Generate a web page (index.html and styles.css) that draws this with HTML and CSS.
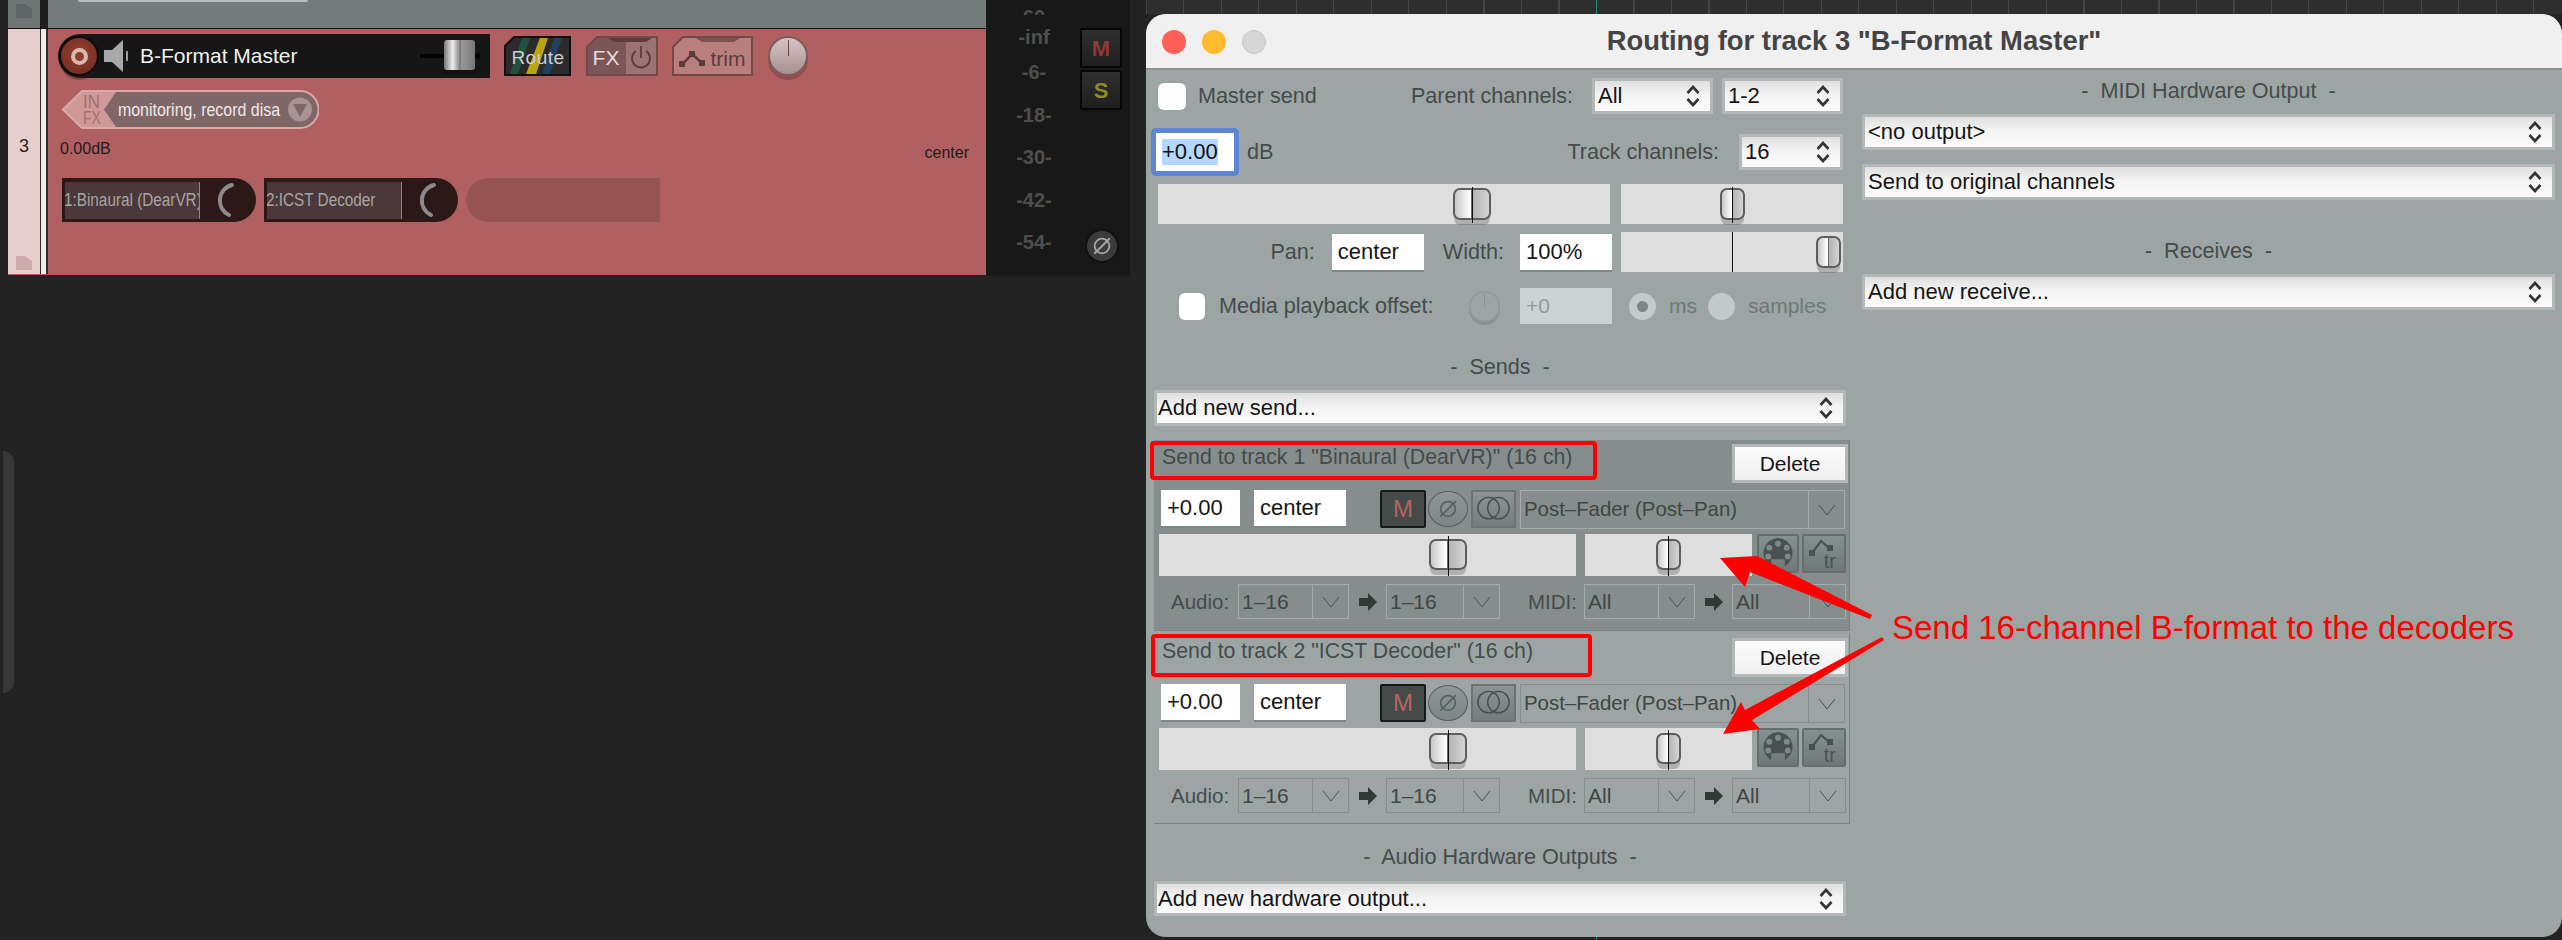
FILE: index.html
```html
<!DOCTYPE html>
<html>
<head>
  <meta charset="utf-8">
  <title>Routing for track 3</title>
  <link rel="stylesheet" href="styles.css">
</head>
<body>

<svg class="defs" width="0" height="0">
  <symbol id="updown" viewBox="0 0 14 22">
    <path d="M1.5 8 L7 2 L12.500 8 M1.500 14 L7 20 L12.500 14" fill="none" stroke="#333" stroke-width="2.6"/>
  </symbol>
  <symbol id="vee" viewBox="0 0 18 12">
    <path d="M1 1 L9 11 L17 1" fill="none" stroke="#4b5251" stroke-width="1"/>
  </symbol>
  <symbol id="rarrow" viewBox="0 0 18 18">
    <path d="M0 5 H9 V0 L18 9 L9 18 V13 H0 Z" fill="#333837"/>
  </symbol>
  <symbol id="phase" viewBox="0 0 24 24">
    <circle cx="12" cy="12" r="8" fill="none" stroke="currentColor" stroke-width="2"/>
    <path d="M3 21 L21 3" stroke="currentColor" stroke-width="2"/>
  </symbol>
  <symbol id="midi" viewBox="0 0 32 36">
    <path d="M16 2 A15.500 15.500 0 0 1 23 31 V24 H9 V31 A15.500 15.500 0 0 1 16 2 Z" fill="#4a5251"/>
    <circle cx="16" cy="8" r="3" fill="#808988"/>
    <circle cx="7" cy="12" r="3" fill="#808988"/>
    <circle cx="25" cy="12" r="3" fill="#808988"/>
    <circle cx="6" cy="21" r="3" fill="#808988"/>
    <circle cx="26" cy="21" r="3" fill="#808988"/>
  </symbol>
  <symbol id="trk" viewBox="0 0 36 30">
    <path d="M8 17 L17 5 L25 12" fill="none" stroke="#4a5251" stroke-width="2.200"/>
    <rect x="5" y="14" width="6" height="6" fill="#4a5251"/>
    <rect x="23" y="9" width="6" height="6" fill="#4a5251"/>
  </symbol>
</svg>

<div class="page">

  <!-- arrange view on the left -->
  <div class="arrange">
    <div class="edge-strip"><div class="scroll-notch"></div></div>
    <div class="lanes">
      <div class="lane-top">
        <div class="num-top"><div class="folder folder-top"></div></div>
        <div class="sep-top"></div>
        <div class="body-top"><div class="prev-pill"></div></div>
      </div>
      <div class="lane-main">
        <div class="num-main">
          <span class="track-num">3</span>
          <div class="folder folder-main"></div>
        </div>
        <div class="sep-main"></div>
        <div class="body-main">
          <div class="tcp-row">
            <div class="name-bar">
              <div class="rec"><div class="rec-ring"></div></div>
              <svg class="speaker" width="24" height="34" viewBox="0 0 24 34">
                <path d="M0 11 H8 L19 1 V33 L8 23 H0 Z" fill="#a9a9a9"/>
                <rect x="22" y="12" width="2" height="10" fill="#999"/>
              </svg>
              <span class="name-text">B-Format Master</span>
              <div class="vol">
                <div class="vol-line"></div>
                <div class="vol-thumb"></div>
              </div>
            </div>
            <svg class="tcp-btn route" width="67" height="40" viewBox="0 0 67 40">
              <path d="M10 1 H66 V39 H1 V10 Z" fill="#2e2a2b" stroke="#111" stroke-width="2"/>
              <path d="M18 2 H26 L14 38 H6 Z" fill="#22503f"/>
              <path d="M36 2 H44 L32 38 H22 Z" fill="#b9a412"/>
              <path d="M50 2 H58 L46 38 H38 Z" fill="#21405a"/>
              <text x="34" y="28" text-anchor="middle" class="route-text">Route</text>
            </svg>
            <svg class="tcp-btn fx" width="72" height="40" viewBox="0 0 72 40">
              <path d="M11 1 H71 V39 H1 V11 Z" fill="#9c7272" stroke="#744848" stroke-width="2"/>
              <path d="M11 2 H40 V38 H2 V11 Z" fill="#7a5656"/>
              <path d="M22 2 H66 L60 6 H28 Z" fill="#5c3d3d"/>
              <text x="20" y="29" text-anchor="middle" class="fx-text">FX</text>
              <path d="M50 15 A9 9 0 1 0 60 15 M55 10 V22" fill="none" stroke="#5c3b3b" stroke-width="1.800"/>
            </svg>
            <svg class="tcp-btn trim" width="81" height="40" viewBox="0 0 81 40">
              <path d="M11 1 H80 V39 H1 V11 Z" fill="#b97f7f" stroke="#744848" stroke-width="2"/>
              <path d="M24 2 H68 L62 6 H30 Z" fill="#7f5050"/>
              <path d="M10 29 L20 18 L30 27" fill="none" stroke="#5c3b3b" stroke-width="2.500"/>
              <rect x="7" y="25" width="6" height="6" fill="#5c3b3b"/>
              <rect x="17" y="15" width="6" height="6" fill="#5c3b3b"/>
              <rect x="27" y="24" width="6" height="6" fill="#5c3b3b"/>
              <text x="56" y="30" text-anchor="middle" class="trim-text">trim</text>
            </svg>
            <div class="trim-knob"><div class="trim-tick"></div></div>
          </div>

          <svg class="input-pill" width="257" height="39" viewBox="0 0 257 39">
            <path d="M20 1 H238 A18.500 18.500 0 0 1 238 38 H20 L1 19.500 Z" fill="#cf9999" stroke="#dba8a8" stroke-width="2"/>
            <path d="M54 2 H238 A17.500 17.500 0 0 1 238 37 H54 L42 19.500 Z" fill="#7f6767"/>
            <text x="21" y="18" textLength="17" lengthAdjust="spacingAndGlyphs" class="infx">IN</text>
            <text x="21" y="34" textLength="18" lengthAdjust="spacingAndGlyphs" class="infx">FX</text>
            <text x="56" y="26" textLength="162" lengthAdjust="spacingAndGlyphs" class="pill-text">monitoring, record disa</text>
            <circle cx="238" cy="19.500" r="12" fill="#a99292"/>
            <path d="M231 14 H245 L238 27 Z" fill="#7f6767"/>
          </svg>

          <div class="readout">
            <span>0.00dB</span>
            <span class="readout-pan">center</span>
          </div>

          <div class="slots">
            <div class="slot">
              <div class="slot-name"><span class="slot-label">1:Binaural (DearVR)</span></div>
              <svg class="slot-arc" width="24" height="36" viewBox="0 0 24 36">
                <path d="M18 3 A16 16 0 0 0 15 33" fill="none" stroke="#8b8b8b" stroke-width="4" stroke-linecap="round"/>
              </svg>
            </div>
            <div class="slot">
              <div class="slot-name"><span class="slot-label">2:ICST Decoder</span></div>
              <svg class="slot-arc" width="24" height="36" viewBox="0 0 24 36">
                <path d="M18 3 A16 16 0 0 0 15 33" fill="none" stroke="#8b8b8b" stroke-width="4" stroke-linecap="round"/>
              </svg>
            </div>
            <div class="slot-empty"></div>
          </div>
        </div>
      </div>
    </div>

    <div class="meter">
      <div class="scale">
        <div class="db db-clip">-60-</div>
        <div class="db db-inf">-inf</div>
        <div class="db db-six">-6-</div>
        <div class="db db-step">-18-</div>
        <div class="db db-step">-30-</div>
        <div class="db db-step">-42-</div>
        <div class="db db-step">-54-</div>
      </div>
      <div class="meter-btns">
        <div class="ms-btn ms-m">M</div>
        <div class="ms-btn ms-s">S</div>
        <svg class="meter-phase"><use href="#phase"/></svg>
      </div>
    </div>
  </div>

  <!-- routing window -->
  <div class="desk">
    <div class="ruler"></div>
    <div class="window">
      <div class="titlebar">
        <div class="lights">
          <span class="light light-red"></span>
          <span class="light light-yellow"></span>
          <span class="light light-grey"></span>
        </div>
        <div class="title">Routing for track 3 "B-Format Master"</div>
      </div>

      <div class="win-body">
        <div class="col-left">
          <div class="row row-one">
            <div class="check"></div>
            <span class="lbl lbl-master">Master send</span>
            <span class="lbl lbl-parent">Parent channels:</span>
            <div class="select sel-parent"><span>All</span><svg class="updown"><use href="#updown"/></svg></div>
            <div class="select sel-pair"><span>1-2</span><svg class="updown"><use href="#updown"/></svg></div>
          </div>

          <div class="row row-two">
            <div class="focus-input"><span class="selected">+0.00</span></div>
            <span class="lbl lbl-db">dB</span>
            <span class="lbl lbl-track">Track channels:</span>
            <div class="select sel-track"><span>16</span><svg class="updown"><use href="#updown"/></svg></div>
          </div>

          <div class="row row-three">
            <div class="fader fader-vol"><div class="tick tick-vol"></div><div class="thumb thumb-wide thumb-vol"></div></div>
            <div class="fader fader-pan"><div class="tick tick-pan"></div><div class="thumb thumb-thin thumb-pan"></div></div>
          </div>

          <div class="row row-four">
            <span class="lbl lbl-pan">Pan:</span>
            <div class="field field-center">center</div>
            <span class="lbl lbl-width">Width:</span>
            <div class="field field-width">100%</div>
            <div class="fader fader-width"><div class="width-mid"></div><div class="thumb thumb-thin thumb-width"></div></div>
          </div>

          <div class="row row-five">
            <div class="check check-media"></div>
            <span class="lbl lbl-media">Media playback offset:</span>
            <div class="knob-off"><div class="knob-tick"></div></div>
            <div class="field-off">+0</div>
            <div class="radio radio-ms"><div class="radio-dot"></div></div>
            <span class="lbl-off lbl-ms">ms</span>
            <div class="radio radio-samples"></div>
            <span class="lbl-off lbl-samples">samples</span>
          </div>

          <div class="section sec-sends">-&nbsp; Sends &nbsp;-</div>
          <div class="select sel-wide sel-send"><span>Add new send...</span><svg class="updown"><use href="#updown"/></svg></div>

          <div class="send send-active">
            <div class="send-head">
              <span class="send-title">Send to track 1 "Binaural (DearVR)" (16 ch)</span>
              <div class="delete">Delete</div>
            </div>
            <div class="send-row-a">
              <div class="field send-vol">+0.00</div>
              <div class="field send-pan">center</div>
              <div class="btn-mute">M</div>
              <svg class="btn-phase"><use href="#phase"/></svg>
              <svg class="btn-stereo" viewBox="0 0 45 38">
                <circle cx="17" cy="18" r="12" fill="none" stroke="#474e4d" stroke-width="1.600"/>
                <circle cx="28" cy="18" r="12" fill="none" stroke="#474e4d" stroke-width="1.600"/>
              </svg>
              <div class="combo combo-mode"><span class="combo-text">Post–Fader (Post–Pan)</span><span class="combo-arrow"><svg class="vee"><use href="#vee"/></svg></span></div>
            </div>
            <div class="send-row-b">
              <div class="fader send-fader-vol"><div class="tick tick-send-vol"></div><div class="thumb thumb-wide thumb-send-vol"></div></div>
              <div class="fader send-fader-pan"><div class="tick tick-send-pan"></div><div class="thumb thumb-thin thumb-send-pan"></div></div>
              <div class="icon-btn btn-midi"><svg class="icon-midi"><use href="#midi"/></svg></div>
              <div class="icon-btn btn-tr"><svg class="icon-trk"><use href="#trk"/></svg><span class="tr-text">tr</span></div>
            </div>
            <div class="send-row-c">
              <span class="lbl lbl-audio">Audio:</span>
              <div class="combo"><span class="combo-text">1–16</span><span class="combo-arrow"><svg class="vee"><use href="#vee"/></svg></span></div>
              <svg class="rarrow"><use href="#rarrow"/></svg>
              <div class="combo"><span class="combo-text">1–16</span><span class="combo-arrow"><svg class="vee"><use href="#vee"/></svg></span></div>
              <span class="lbl lbl-midi">MIDI:</span>
              <div class="combo"><span class="combo-text">All</span><span class="combo-arrow"><svg class="vee"><use href="#vee"/></svg></span></div>
              <svg class="rarrow"><use href="#rarrow"/></svg>
              <div class="combo"><span class="combo-text">All</span><span class="combo-arrow"><svg class="vee"><use href="#vee"/></svg></span></div>
            </div>
          </div>

          <div class="send send-next">
            <div class="send-head">
              <span class="send-title">Send to track 2 "ICST Decoder" (16 ch)</span>
              <div class="delete">Delete</div>
            </div>
            <div class="send-row-a">
              <div class="field send-vol">+0.00</div>
              <div class="field send-pan">center</div>
              <div class="btn-mute">M</div>
              <svg class="btn-phase"><use href="#phase"/></svg>
              <svg class="btn-stereo" viewBox="0 0 45 38">
                <circle cx="17" cy="18" r="12" fill="none" stroke="#474e4d" stroke-width="1.600"/>
                <circle cx="28" cy="18" r="12" fill="none" stroke="#474e4d" stroke-width="1.600"/>
              </svg>
              <div class="combo combo-mode"><span class="combo-text">Post–Fader (Post–Pan)</span><span class="combo-arrow"><svg class="vee"><use href="#vee"/></svg></span></div>
            </div>
            <div class="send-row-b">
              <div class="fader send-fader-vol"><div class="tick tick-send-vol"></div><div class="thumb thumb-wide thumb-send-vol"></div></div>
              <div class="fader send-fader-pan"><div class="tick tick-send-pan"></div><div class="thumb thumb-thin thumb-send-pan"></div></div>
              <div class="icon-btn btn-midi"><svg class="icon-midi"><use href="#midi"/></svg></div>
              <div class="icon-btn btn-tr"><svg class="icon-trk"><use href="#trk"/></svg><span class="tr-text">tr</span></div>
            </div>
            <div class="send-row-c">
              <span class="lbl lbl-audio">Audio:</span>
              <div class="combo"><span class="combo-text">1–16</span><span class="combo-arrow"><svg class="vee"><use href="#vee"/></svg></span></div>
              <svg class="rarrow"><use href="#rarrow"/></svg>
              <div class="combo"><span class="combo-text">1–16</span><span class="combo-arrow"><svg class="vee"><use href="#vee"/></svg></span></div>
              <span class="lbl lbl-midi">MIDI:</span>
              <div class="combo"><span class="combo-text">All</span><span class="combo-arrow"><svg class="vee"><use href="#vee"/></svg></span></div>
              <svg class="rarrow"><use href="#rarrow"/></svg>
              <div class="combo"><span class="combo-text">All</span><span class="combo-arrow"><svg class="vee"><use href="#vee"/></svg></span></div>
            </div>
          </div>

          <div class="section sec-hw">-&nbsp; Audio Hardware Outputs &nbsp;-</div>
          <div class="select sel-wide sel-hw"><span>Add new hardware output...</span><svg class="updown"><use href="#updown"/></svg></div>
        </div>

        <div class="col-right">
          <div class="section sec-midi">-&nbsp; MIDI Hardware Output &nbsp;-</div>
          <div class="select sel-right sel-midi"><span>&lt;no output&gt;</span><svg class="updown"><use href="#updown"/></svg></div>
          <div class="select sel-right sel-orig"><span>Send to original channels</span><svg class="updown"><use href="#updown"/></svg></div>
          <div class="section sec-recv">-&nbsp; Receives &nbsp;-</div>
          <div class="select sel-right sel-midi"><span>Add new receive...</span><svg class="updown"><use href="#updown"/></svg></div>
        </div>
      </div>
    </div>
  </div>

  <!-- red markup drawn on top of the screenshot -->
  <svg class="markup" width="2562" height="940" viewBox="0 0 2562 940">
    <rect x="1152" y="443" width="443" height="35" rx="2" fill="none" stroke="#f00" stroke-width="4"/>
    <rect x="1153" y="636" width="437" height="39" rx="2" fill="none" stroke="#f00" stroke-width="4"/>
    <path d="M1872 615 L1757 556 L1720 558 L1745 587 L1750 572 L1870 619 Z" fill="#f00"/>
    <path d="M1882 637 L1745 710 L1741 702 L1723 734 L1760 729 L1752 720 L1884 640 Z" fill="#f00"/>
  </svg>
  <div class="callout">Send 16-channel B-format to the decoders</div>

</div>

</body>
</html>
```

FILE: styles.css
```css
* {
  box-sizing: border-box;
}

body {
  margin: 0;
  background-color: #222;
  font-family: "Liberation Sans", Arial, sans-serif;
}

.defs {
  position: absolute;
}

.page {
  position: relative;
  display: flex;
  width: 2562px;
  height: 940px;
  overflow: hidden;
  background-color: #232323;
}

/* arrange view */

.arrange {
  display: flex;
  width: 1146px;
  height: 276px;
  flex: none;
}

.edge-strip {
  position: relative;
  width: 8px;
  flex: none;
}

.scroll-notch {
  position: absolute;
  top: 451px;
  left: 3px;
  width: 11px;
  height: 242px;
  background-color: #383838;
  border-radius: 0 10px 10px 0;
}

.lanes {
  width: 978px;
  flex: none;
}

.lane-top {
  display: flex;
  height: 29px;
  border-bottom: 1px solid #111;
}

.num-top {
  width: 32px;
  padding: 4px 8px;
  background-color: #6d7575;
}

.sep-top {
  width: 8px;
  background-color: #1d1d1d;
}

.body-top {
  flex: 1;
  background-color: #737b7b;
}

.prev-pill {
  width: 230px;
  height: 2px;
  margin-left: 30px;
  background-color: #b9bebe;
  border-radius: 0 0 6px 6px;
}

.folder {
  width: 16px;
  height: 14px;
  clip-path: polygon(0 0, 55% 0, 100% 35%, 100% 100%, 0 100%);
}

.folder-top {
  background-color: #5d6565;
}

.folder-main {
  position: absolute;
  left: 8px;
  bottom: 4px;
  background-color: #cfaaaa;
}

.lane-main {
  display: flex;
  height: 246px;
  border-bottom: 1px solid #c25656;
}

.num-main {
  position: relative;
  display: flex;
  align-items: center;
  justify-content: center;
  width: 32px;
  background-color: #e8cfcf;
}

.track-num {
  margin-top: -11px;
  font-size: 18px;
  color: #2b2222;
}

.sep-main {
  width: 8px;
  background-color: #eee;
  border-left: 1px solid #332a2a;
  border-right: 2px solid #332a2a;
}

.body-main {
  flex: 1;
  padding: 5px 0 0 10px;
  background-color: #b06061;
}

.tcp-row {
  display: flex;
  align-items: center;
  height: 44px;
}

.name-bar {
  display: flex;
  align-items: center;
  width: 432px;
  height: 44px;
  background-color: #161616;
  border-radius: 22px 0 0 22px;
  flex: none;
}

.rec {
  display: flex;
  align-items: center;
  justify-content: center;
  width: 40px;
  height: 40px;
  margin-left: 1px;
  background: radial-gradient(circle at 50% 40%, #92402e, #6e2a1f);
  border: 2px solid #0b0b0b;
  border-radius: 50%;
  box-shadow: 0 5px 0 -1px rgba(60, 20, 20, 0.35);
}

.rec-ring {
  width: 17px;
  height: 17px;
  background-color: #8e3c2c;
  border: 4px solid #d9b9b0;
  border-radius: 50%;
}

.speaker {
  margin-left: 5px;
  flex: none;
}

.name-text {
  margin-left: 12px;
  font-size: 21px;
  color: #f1f1f1;
}

.vol {
  position: relative;
  width: 60px;
  height: 44px;
  margin-left: auto;
  margin-right: 10px;
}

.vol-line {
  position: absolute;
  top: 20px;
  left: 0;
  width: 60px;
  height: 4px;
  background-color: #000;
}

.vol-thumb {
  position: absolute;
  top: 6px;
  left: 24px;
  width: 31px;
  height: 30px;
  background: linear-gradient(90deg, #777, #eee 28%, #888 50%, #444 50%, #9a9a9a 55%, #777 100%);
  border-radius: 3px;
  box-shadow: 0 4px 0 #111;
}

.tcp-btn {
  flex: none;
}

.route {
  margin-left: 14px;
}

.fx {
  margin-left: 15px;
}

.trim {
  margin-left: 14px;
}

.route-text {
  font-size: 19px;
  fill: #cfcfcf;
  letter-spacing: 0.5px;
}

.fx-text {
  font-size: 21px;
  fill: #e6dcdc;
}

.trim-text {
  font-size: 21px;
  fill: #5c3b3b;
}

.trim-knob {
  position: relative;
  width: 40px;
  height: 40px;
  margin-left: 15px;
  background: linear-gradient(#d8c3c3, #a89090);
  border: 2px solid #7d5a5a;
  border-radius: 50%;
  box-shadow: 0 4px 0 rgba(90, 40, 40, 0.35);
  flex: none;
}

.trim-tick {
  position: absolute;
  top: 2px;
  left: 18px;
  width: 1px;
  height: 16px;
  background-color: #5f4a4a;
}

.input-pill {
  display: block;
  margin: 12px 0 0 4px;
}

.infx {
  font-size: 18px;
  fill: #a56d6d;
}

.pill-text {
  font-size: 19px;
  fill: #efe9e9;
}

.readout {
  display: flex;
  justify-content: space-between;
  align-items: center;
  height: 20px;
  margin: 10px 17px 0 2px;
  font-size: 16px;
  color: #241b1b;
}

.readout-pan {
  margin-top: 8px;
}

.slots {
  display: flex;
  gap: 8px;
  margin: 19px 0 0 4px;
}

.slot {
  display: flex;
  align-items: center;
  width: 194px;
  height: 44px;
  padding-left: 3px;
  background-color: #2b1817;
  border-radius: 0 22px 22px 0;
}

.slot-name {
  width: 135px;
  height: 37px;
  overflow: hidden;
  font-size: 18px;
  line-height: 37px;
  white-space: nowrap;
  color: #a9a4a4;
  background-color: #4a3938;
  border-right: 1px solid #8d8484;
}

.slot-label {
  display: inline-block;
  margin-left: -1px;
  transform: scaleX(0.85);
  transform-origin: left center;
}

.slot-arc {
  margin-left: 14px;
}

.slot-empty {
  width: 194px;
  height: 44px;
  background-color: #955354;
  border-radius: 22px 0 0 22px;
}

.meter {
  display: flex;
  width: 144px;
  height: 276px;
  background-color: #181818;
  overflow: hidden;
  flex: none;
}

.scale {
  width: 96px;
  flex: none;
  text-align: center;
}

.db {
  font-size: 20px;
  font-weight: bold;
  line-height: 22px;
  color: #4f4f4f;
}

.db-clip {
  height: 15px;
  padding-top: 6px;
  overflow: hidden;
}

.db-inf {
  margin-top: 11px;
}

.db-six {
  margin-top: 13px;
}

.db-step {
  margin-top: 20.5px;
}

.meter-btns {
  padding: 28px 0 0 0;
  margin-left: -2px;
}

.ms-btn {
  width: 42px;
  height: 40px;
  margin-bottom: 2px;
  font-size: 22px;
  font-weight: bold;
  line-height: 38px;
  text-align: center;
  background: linear-gradient(#2f2f2f, #1f1f1f);
  border: 2px solid #060606;
  border-radius: 2px;
}

.ms-m {
  color: #8d3a35;
}

.ms-s {
  color: #8f8a30;
}

.meter-phase {
  display: block;
  width: 30px;
  height: 30px;
  margin: 121px 0 0 7px;
  padding: 4px;
  color: #a6a6a6;
  background-color: #3b3b3b;
  border-radius: 50%;
  box-shadow: 0 0 0 2px #111;
}

/* routing window */

.desk {
  width: 1416px;
  height: 940px;
  flex: none;
  background: linear-gradient(#2a8a7a, #2a8a7a) 450px 0 / 1px 100% no-repeat;
}

.ruler {
  height: 14px;
  background:
    linear-gradient(#2a8a7a, #2a8a7a) 450px 0 / 1px 100% no-repeat,
    repeating-linear-gradient(90deg, #454545 0, #454545 1px, transparent 1px, transparent 37.500px),
    #2e2e2e;
}

.window {
  height: 923px;
  background-color: #9ca5a3;
  border-radius: 20px;
  overflow: hidden;
}

.titlebar {
  position: relative;
  display: flex;
  align-items: center;
  justify-content: center;
  height: 56px;
  background-color: #f0f0f0;
  border-bottom: 2px solid #8b9291;
}

.lights {
  position: absolute;
  top: 16px;
  left: 16px;
  display: flex;
  gap: 16px;
}

.light {
  width: 24px;
  height: 24px;
  border-radius: 50%;
}

.light-red {
  background-color: #ff5f57;
}

.light-yellow {
  background-color: #febc2e;
}

.light-grey {
  background-color: #d6d6d6;
  border: 1px solid #c4c4c4;
}

.title {
  font-size: 27.4px;
  font-weight: bold;
  color: #444;
}

.win-body {
  display: flex;
  height: 867px;
}

.col-left {
  width: 704px;
  padding-top: 8px;
  flex: none;
}

.col-right {
  width: 693px;
  margin-left: 12px;
  flex: none;
}

.row {
  display: flex;
  align-items: center;
  padding: 0 7px 0 12px;
}

.row-one {
  height: 36px;
}

.row-two {
  height: 48px;
  margin-top: 14px;
}

.row-three {
  height: 40px;
  margin-top: 8px;
  justify-content: space-between;
}

.row-four {
  height: 40px;
  margin-top: 8px;
}

.row-five {
  height: 36px;
  margin-top: 16px;
}

.lbl {
  font-size: 21.6px;
  color: #454b4b;
  white-space: nowrap;
}

.lbl-off {
  font-size: 21px;
  color: #6f7777;
}

.check {
  width: 28px;
  height: 27px;
  background-color: #fff;
  border-radius: 6px;
  flex: none;
}

.lbl-master {
  margin-left: 12px;
}

.lbl-parent {
  margin-left: auto;
}

.select {
  display: flex;
  align-items: center;
  justify-content: space-between;
  height: 36px;
  padding: 0 10px 0 3px;
  font-size: 22px;
  color: #151515;
  background: linear-gradient(#dfdfdf, #f3f3f3 45%, #fbfbfb);
  border: 3px solid #b2b8b7;
  flex: none;
}

.updown {
  width: 14px;
  height: 22px;
  flex: none;
}

.sel-parent {
  width: 121px;
  margin-left: 19px;
}

.sel-pair {
  width: 121px;
  margin-left: 9px;
}

.focus-input {
  display: flex;
  align-items: center;
  width: 88px;
  height: 48px;
  margin-left: -7px;
  padding-left: 6px;
  background-color: #fff;
  border: 5px solid #5c85d6;
  border-radius: 5px;
  font-size: 22px;
  color: #111;
}

.selected {
  background-color: #b3d7ff;
  padding: 0;
}

.lbl-db {
  margin-left: 8px;
}

.lbl-track {
  margin-left: auto;
}

.sel-track {
  width: 104px;
  margin-left: 20px;
}

.fader {
  position: relative;
  height: 40px;
  background-color: #dedede;
  flex: none;
}

.fader-vol {
  width: 452px;
}

.fader-pan {
  width: 222px;
}

.fader-width {
  width: 222px;
  margin-left: 9px;
}

.thumb {
  position: absolute;
  top: 4px;
  height: 32px;
  background: linear-gradient(90deg, #c9c9c9, #fff 46%, #666 48.500%, #666 51.500%, #b5b5b5 54%, #d5d5d5);
  border: 2px solid #5d5d5d;
  border-radius: 7px;
  box-shadow: 0 6px 0 -1px rgba(90, 95, 95, 0.35);
}

.thumb-wide {
  width: 38px;
}

.thumb-thin {
  width: 25px;
}

.tick {
  position: absolute;
  top: 3px;
  z-index: 1;
  width: 1px;
  height: 36px;
  background-color: #111;
}

.thumb-vol {
  left: 295px;
}

.tick-vol {
  left: 314px;
}

.thumb-pan {
  left: 99px;
}

.tick-pan {
  left: 111px;
}

.width-mid {
  position: absolute;
  top: 0;
  left: 111px;
  width: 1px;
  height: 40px;
  background-color: #111;
}

.thumb-width {
  left: 195px;
}

.field {
  display: flex;
  align-items: center;
  height: 36px;
  padding-left: 6px;
  font-size: 22px;
  color: #151515;
  background-color: #fff;
  box-shadow: 0 2px 0 #7f8786;
  flex: none;
}

.lbl-pan {
  margin-left: auto;
}

.field-center {
  width: 92px;
  margin-left: 17px;
}

.lbl-width {
  margin-left: 19px;
}

.field-width {
  width: 92px;
  margin-left: 16px;
}

.check-media {
  margin-left: 21px;
  width: 26px;
}

.lbl-media {
  width: 250px;
  margin-left: 14px;
}

.knob-off {
  position: relative;
  width: 31px;
  height: 31px;
  border: 1px solid #8a9392;
  border-radius: 50%;
  box-shadow: 0 3px 0 rgba(120, 128, 127, 0.5);
  flex: none;
}

.knob-tick {
  position: absolute;
  top: 2px;
  left: 14px;
  width: 1px;
  height: 14px;
  background-color: #8a9392;
}

.field-off {
  display: flex;
  align-items: center;
  width: 92px;
  height: 36px;
  margin-left: 20px;
  padding-left: 6px;
  font-size: 21px;
  color: #959c9b;
  background-color: #cdd2d2;
  flex: none;
}

.radio {
  display: flex;
  align-items: center;
  justify-content: center;
  width: 27px;
  height: 27px;
  background-color: #c4c9c9;
  border-radius: 50%;
  flex: none;
}

.radio-dot {
  width: 11px;
  height: 11px;
  background-color: #7f8786;
  border-radius: 50%;
}

.radio-ms {
  margin-left: 17px;
}

.lbl-ms {
  margin-left: 13px;
}

.radio-samples {
  margin-left: 11px;
}

.lbl-samples {
  margin-left: 13px;
}

.section {
  height: 24px;
  font-size: 21.6px;
  line-height: 24px;
  text-align: center;
  white-space: nowrap;
  color: #454b4b;
}

.sec-sends {
  width: 708px;
  margin-top: 31px;
}

.sel-wide {
  width: 692px;
  margin-left: 8px;
  padding-left: 1px;
}

.sel-send {
  margin-top: 11px;
}

.send {
  width: 696px;
  height: 191px;
  margin-left: 8px;
  border-right: 1px solid #7b8483;
  border-bottom: 1px solid #7b8483;
}

.send-active {
  margin-top: 14px;
  background-color: #858e8c;
}

.send-next {
  margin-top: 2px;
}

.send-head {
  display: flex;
  justify-content: space-between;
  align-items: flex-start;
  height: 43px;
  padding: 4px 1px 0 8px;
}

.send-next .send-head {
  height: 44px;
  padding-top: 5px;
}

.send-title {
  font-size: 21.3px;
  line-height: 26px;
  color: #454b4b;
}

.delete {
  width: 116px;
  height: 39px;
  font-size: 21px;
  line-height: 33px;
  text-align: center;
  color: #151515;
  background: linear-gradient(#fbfbfb, #f0f0f0);
  border: 3px solid #b2b8b7;
}

.send-row-a {
  display: flex;
  align-items: flex-start;
  height: 39px;
  margin-top: 7px;
  padding-left: 7px;
}

.send-vol {
  width: 79px;
}

.send-pan {
  width: 92px;
  margin-left: 14px;
}

.btn-mute {
  width: 46px;
  height: 38px;
  margin-left: 34px;
  font-size: 24px;
  line-height: 34px;
  text-align: center;
  color: #b5655f;
  background-color: #464b4a;
  border: 2px solid #171a1a;
  border-radius: 2px;
  flex: none;
}

.btn-phase {
  width: 40px;
  height: 36px;
  margin: 1px 0 0 2px;
  padding: 6px 8px;
  color: #5a6261;
  background: linear-gradient(#8f9897, #7d8685);
  border: 1px solid #565e5d;
  border-radius: 50%;
  flex: none;
}

.btn-stereo {
  width: 45px;
  height: 38px;
  margin-left: 3px;
  background: linear-gradient(#8c9594, #747d7c);
  border: 2px solid #6b7473;
  flex: none;
}

.combo {
  display: flex;
  align-items: center;
  height: 35px;
  border: 1px solid #a6acab;
}

.send-next .combo,
.send-next .combo-arrow {
  border-color: #858e8c;
}

.combo-text {
  flex: 1;
  padding-left: 3px;
  font-size: 21px;
  white-space: nowrap;
  overflow: hidden;
  color: #3f4645;
}

.combo-arrow {
  display: flex;
  align-items: center;
  justify-content: center;
  width: 36px;
  height: 100%;
  border-left: 1px solid #a6acab;
  flex: none;
}

.vee {
  width: 18px;
  height: 12px;
}

.combo-mode {
  width: 325px;
  height: 39px;
  margin-left: 4px;
  flex: none;
}

.combo-mode .combo-text {
  font-size: 20.4px;
}

.send-row-b {
  display: flex;
  align-items: flex-start;
  height: 42px;
  margin-top: 5px;
  padding-left: 5px;
}

.send-row-b .fader {
  height: 42px;
}

.send-fader-vol {
  width: 417px;
}

.send-fader-pan {
  width: 167px;
  margin-left: 9px;
}

.tick-send-vol {
  left: 289px;
  height: 40px;
  top: 2px;
}

.tick-send-pan {
  left: 83px;
  height: 40px;
  top: 2px;
}

.thumb-send-vol {
  left: 270px;
  top: 5px;
  height: 31px;
}

.thumb-send-pan {
  left: 71px;
  top: 5px;
  height: 31px;
}

.icon-btn {
  position: relative;
  height: 39px;
  background: linear-gradient(#879090, #6f7877);
  border: 2px solid #656e6d;
  border-radius: 2px;
  flex: none;
}

.btn-midi {
  width: 42px;
  margin-left: 5px;
}

.btn-tr {
  width: 44px;
  margin-left: 3px;
}

.icon-midi {
  display: block;
  width: 32px;
  height: 35px;
  margin-left: 3px;
}

.icon-trk {
  display: block;
  width: 36px;
  height: 30px;
}

.tr-text {
  position: absolute;
  right: 8px;
  bottom: 0;
  font-size: 20px;
  line-height: 20px;
  color: #4a5251;
}

.send-row-c {
  display: grid;
  grid-template-columns: 67px 111px 37px 114px 84px 111px 37px 114px;
  align-items: center;
  height: 35px;
  margin-top: 8px;
  padding-left: 17px;
}

.rarrow {
  width: 18px;
  height: 18px;
  justify-self: center;
}

.lbl-audio {
  font-size: 20.5px;
}

.lbl-midi {
  justify-self: end;
  padding-right: 7px;
  font-size: 20.5px;
}

.sec-hw {
  width: 708px;
  margin-top: 21px;
}

.sel-hw {
  height: 35px;
  margin-top: 12px;
}

.sec-midi {
  margin-top: 9px;
}

.sel-right {
  width: 693px;
}

.sel-midi {
  margin-top: 11px;
}

.sel-orig {
  margin-top: 14px;
}

.sec-recv {
  margin-top: 39px;
}

/* annotation layer */

.markup {
  position: absolute;
  top: 0;
  left: 0;
  pointer-events: none;
}

.callout {
  position: absolute;
  top: 608px;
  left: 1892px;
  font-size: 33px;
  line-height: 40px;
  white-space: nowrap;
  color: #f00;
}
```
